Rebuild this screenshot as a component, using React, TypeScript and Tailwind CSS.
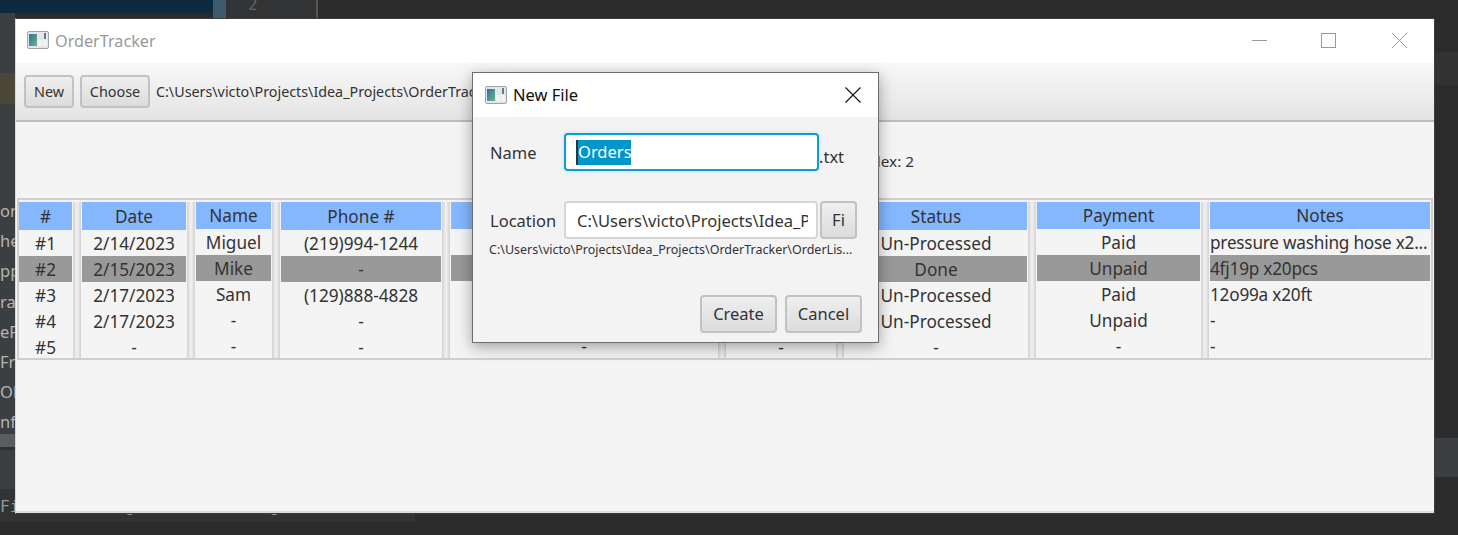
import React from "react";

const font = "font-['Noto_Sans','Open_Sans',sans-serif]";

function JavaIcon({ className }: { className: string }) {
  return (
    <svg className={className} viewBox="0 0 22 18">
      <defs>
        <linearGradient id="jg" x1="0" y1="0" x2="1" y2="1">
          <stop offset="0" stopColor="#2f6f9f" />
          <stop offset="1" stopColor="#6fb58a" />
        </linearGradient>
      </defs>
      <rect x="0.5" y="0.5" width="21" height="17" rx="1.5" fill="#e4e6e8" stroke="#a0a4a8" />
      <rect x="2" y="3" width="8" height="12" fill="url(#jg)" />
      <rect x="11" y="9" width="4" height="6" fill="#f4f4f4" />
      <rect x="16" y="9" width="4" height="6" fill="#f4f4f4" />
      <rect x="17" y="2" width="2" height="6" fill="#5d7f8f" />
    </svg>
  );
}

function Btn({ label, className }: { label: string; className: string }) {
  return (
    <div
      className={`flex items-center justify-center rounded-[4px] border-2 border-[#c2c2c2] bg-gradient-to-b from-[#efefef] to-[#dcdcdc] text-[#333] ${className}`}
    >
      {label}
    </div>
  );
}

type Col = { title: string; w: string; head: string; rows: string[]; left?: boolean };

const cols: Col[] = [
  { title: "#", w: "w-[53px]", head: "h-[28px]", rows: ["#1", "#2", "#3", "#4", "#5"] },
  { title: "Date", w: "w-[104px]", head: "h-[28px]", rows: ["2/14/2023", "2/15/2023", "2/17/2023", "2/17/2023", "-"] },
  { title: "Name", w: "w-[75px]", head: "h-[27px]", rows: ["Miguel", "Mike", "Sam", "-", "-"] },
  { title: "Phone #", w: "w-[160px]", head: "h-[28px]", rows: ["(219)994-1244", "-", "(129)888-4828", "-", "-"] },
  { title: "Address", w: "w-[266px]", head: "h-[27px]", rows: ["-", "-", "-", "-", "-"] },
  { title: "Total", w: "w-[108px]", head: "h-[28px]", rows: ["-", "-", "-", "-", "-"] },
  { title: "Status", w: "w-[182px]", head: "h-[28px]", rows: ["Un-Processed", "Done", "Un-Processed", "Un-Processed", "-"] },
  { title: "Payment", w: "w-[163px]", head: "h-[27px]", rows: ["Paid", "Unpaid", "Paid", "Unpaid", "-"] },
  {
    title: "Notes",
    w: "w-[220px]",
    head: "h-[27px]",
    rows: ["pressure washing hose x2...", "4fj19p x20pcs", "12o99a x20ft", "-", "-"],
    left: true,
  },
];

function Handle() {
  return <div className="w-[10px] shrink-0 self-stretch px-px"><div className="h-full bg-gradient-to-r from-[#d2d2d2] via-[#f2f2f2] to-[#d2d2d2]" /></div>;
}

function Column({ col }: { col: Col }) {
  return (
    <div className={`${col.w} shrink-0 flex flex-col overflow-hidden`}>
      <div className={`${col.head} shrink-0 bg-[#85b7ff] flex items-center justify-center pt-px text-[#333]`}>{col.title}</div>
      {col.rows.map((r, i) => (
        <div
          key={i}
          className={`h-[26px] shrink-0 flex items-center pt-px whitespace-nowrap text-[#333] ${col.left ? "justify-start tracking-[-0.22px]" : "justify-center"} ${i === 1 ? "bg-[#999999]" : ""}`}
        >
          {r}
        </div>
      ))}
    </div>
  );
}

export default function App() {
  const sideText = ["or", "her", "pp", "ran", "eF", "Fra", "Ob", "nfo"];
  return (
    <div className={`relative w-[1458px] h-[535px] overflow-hidden bg-[#2b2b2b] ${font}`}>
      {/* IDE backdrop */}
      <div className="absolute left-0 top-0 w-[213px] h-[13px] bg-[#0d2a40]" />
      <div className="absolute left-[213px] top-0 w-[13px] h-[19px] bg-[#3e5a6e]" />
      <div className="absolute left-[226px] top-0 w-[90px] h-[19px] bg-[#313335] text-[#606366] text-[16px] leading-none pl-[22px] font-['DejaVu_Sans_Mono',monospace] flex items-end pb-[6px]">2</div>
      <div className="absolute left-[316px] top-0 w-[2px] h-[19px] bg-[#555555]" />
      <div className="absolute left-0 top-[13px] w-[15px] h-[477px] bg-[#3c3f41]" />
      <div className="absolute left-0 top-[73px] w-[15px] h-[31px] bg-[#4b4738]" />
      <div className="absolute left-0 top-[196px] w-[15px] flex flex-col items-start overflow-hidden text-[#b4b4b4] text-[16.5px] leading-[30.2px] whitespace-nowrap">
        {sideText.map((t) => (
          <div key={t} className="h-[30.2px]">{t}</div>
        ))}
      </div>
      <div className="absolute left-0 top-[434px] w-[15px] h-[13px] bg-[#5a5c5e]" />
      <div className="absolute left-0 top-[447px] w-[15px] h-[3px] bg-[#2f3133]" />
      <div className="absolute left-0 top-[489px] w-[415px] h-[33px] bg-[#313335] overflow-hidden text-[#8d9aa5] text-[16px] leading-[26px] pt-[5px] whitespace-pre font-['DejaVu_Sans_Mono',monospace]">File a, Strong  others, Strng</div>
      <div className="absolute left-[1434px] top-[52px] w-[24px] h-[33px] bg-[#323232]" />
      <div className="absolute left-[1434px] top-[438px] w-[24px] h-[39px] bg-[#3c3f41]" />

      {/* Main window */}
      <div className="absolute left-[15px] top-[18px] w-[1420px] h-[496px] border border-[#3d3d3d] border-l-[#d8d8d8] flex flex-col bg-[#f4f4f4] text-[17.2px]">
        <div className="h-[44px] shrink-0 bg-white flex items-center pl-[11px] pr-[27px]">
          <JavaIcon className="w-[22px] h-[18px] mb-[3px]" />
          <span className="ml-[6px] text-[#999999] text-[16.2px]">OrderTracker</span>
          <div className="ml-auto flex items-center mb-px">
            <div className="w-[15px] h-px bg-[#999999]" />
            <div className="ml-[54px] w-[15px] h-[15px] border border-[#999999]" />
            <svg className="ml-[56px]" width="15" height="15" viewBox="0 0 15 15">
              <path d="M0 0L15 15M15 0L0 15" stroke="#999999" strokeWidth="1" />
            </svg>
          </div>
        </div>
        <div className="h-[59px] shrink-0 border-b-2 border-[#bcbcbc] bg-gradient-to-b from-[#f8f8f8] to-[#e4e4e4] flex items-center pl-[8px] text-[14.4px] whitespace-nowrap">
          <Btn label="New" className="w-[50px] h-[33px]" />
          <Btn label="Choose" className="ml-[6px] w-[70px] h-[33px]" />
          <span className="ml-[6px] text-[#333] text-[14.3px]">C:\Users\victo\Projects\Idea_Projects\OrderTracker\OrderList.txt</span>
        </div>
        <div className="h-[76px] shrink-0 flex items-center justify-end pr-[520px] pt-[3px] text-[15.3px] text-[#333]">Selected Index: 2</div>
        <div className="mx-px h-[162px] shrink-0 border-2 border-[#cfcfcf] pt-[2px] flex overflow-hidden">
          {cols.map((c, i) => (
            <React.Fragment key={c.title}>
              {i > 0 && <Handle />}
              <Column col={c} />
            </React.Fragment>
          ))}
        </div>
        <div className="flex-1 border-b-2 border-b-[#dcdcdc]" />
      </div>

      {/* Dialog */}
      <div className="absolute left-[472px] top-[72px] w-[407px] h-[271px] border border-[#6e6e6e] bg-[#f3f3f3] shadow-[0_4px_14px_rgba(0,0,0,0.35)] flex flex-col text-[16.5px] text-[#333]">
        <div className="h-[44px] shrink-0 bg-white flex items-center pl-[12px] pr-[17px]">
          <JavaIcon className="w-[22px] h-[18px]" />
          <span className="ml-[6px] text-[#111] text-[16.5px]">New File</span>
          <svg className="ml-auto" width="16" height="16" viewBox="0 0 16 16">
            <path d="M0.5 0.5L15.5 15.5M15.5 0.5L0.5 15.5" stroke="#111" strokeWidth="1.1" />
          </svg>
        </div>
        <div className="flex-1 flex flex-col pl-[17px] pt-[16px]">
          <div className="flex items-center h-[38px]">
            <span className="w-[74px] pt-[2px]">Name</span>
            <div className="w-[255px] h-[38px] rounded-[4px] border-2 border-[#0a9fd8] bg-white shadow-[0_0_3px_#a8dcf0] flex items-center pl-[10px]">
              <span className="border-l-2 border-[#333] bg-[#0096c9] text-white h-[25px] w-[55px] flex items-center leading-none whitespace-nowrap overflow-hidden">Orders</span>
            </div>
            <span className="mt-[10px]">.txt</span>
          </div>
          <div className="flex items-center h-[38px] mt-[30px]">
            <span className="w-[74px] pt-[2px]">Location</span>
            <div className="w-[254px] h-[38px] rounded-[4px] border-2 border-[#d6d6d6] bg-white flex items-center pl-[11px] pr-[8px] overflow-hidden whitespace-nowrap">
              <span className="overflow-hidden pt-[2px]">C:\Users\victo\Projects\Idea_Projects</span>
            </div>
            <Btn label="Fi" className="ml-[2px] w-[37px] h-[38px]" />
          </div>
          <div className="mt-[3px] text-[12.5px] leading-[16px] whitespace-nowrap -ml-px">C:\Users\victo\Projects\Idea_Projects\OrderTracker\OrderLis...</div>
          <div className="flex justify-end gap-[8px] mt-[37px] pr-[16px]">
            <Btn label="Create" className="w-[77px] h-[38px]" />
            <Btn label="Cancel" className="w-[77px] h-[38px]" />
          </div>
        </div>
      </div>
    </div>
  );
}
